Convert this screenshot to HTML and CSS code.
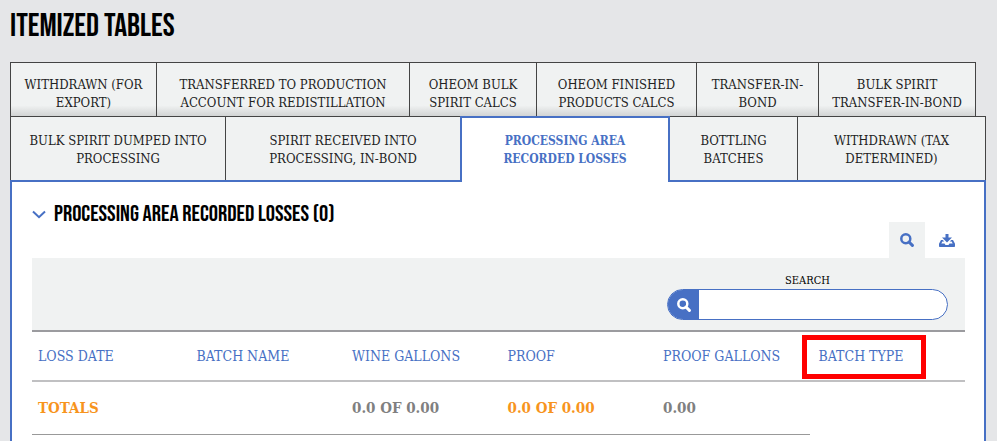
FILE: index.html
```html
<!DOCTYPE html>
<html lang="en">
<head>
	<meta charset="utf-8">
	<meta name="viewport" content="width=device-width, initial-scale=1.0">
	<title>Itemized Tables</title>
	<link rel="stylesheet" href="styles.css">
</head>
<body>
	<svg class="sprite" aria-hidden="true">
		<symbol id="icon-search" viewBox="0 0 14 14">
			<circle cx="5.8" cy="5.8" r="4.5" fill="none" stroke="currentColor" stroke-width="2.5"/>
			<path d="M9 9l3.400 3.400" stroke="currentColor" stroke-width="3" stroke-linecap="round"/>
		</symbol>
		<symbol id="icon-download" viewBox="0 0 16 13">
			<path fill="currentColor" d="M6.500 0h3v3.500H13l-5 5-5-5h3.500z"/>
			<path fill="currentColor" d="M2 6h1.800l1.500 1.500H3.400L2.300 9.500h3.200L6.500 11h3l1-1.500h3.200l-1.100-2h-1.900L12.200 6H14l2 3.700v2.500q0 .8-.8.8H.8Q0 13 0 12.200V9.700z"/>
		</symbol>
	</svg>

	<main class="page">
		<h1>Itemized Tables</h1>

		<div class="tabs tabs-back">
			<button type="button" class="tab">Withdrawn (for<br>export)</button>
			<button type="button" class="tab">Transferred to production<br>account for redistillation</button>
			<button type="button" class="tab">OHEOM bulk<br>spirit calcs</button>
			<button type="button" class="tab">OHEOM finished<br>products calcs</button>
			<button type="button" class="tab">Transfer-in-<br>bond</button>
			<button type="button" class="tab">Bulk spirit<br>transfer-in-bond</button>
		</div>
		<div class="tabs tabs-front">
			<button type="button" class="tab">Bulk spirit dumped into<br>processing</button>
			<button type="button" class="tab">Spirit received into<br>processing, in-bond</button>
			<button type="button" class="tab active">Processing area<br>recorded losses</button>
			<button type="button" class="tab">Bottling<br>batches</button>
			<button type="button" class="tab">Withdrawn (tax<br>determined)</button>
		</div>

		<section class="panel">
			<h2>
				<svg class="chevron" viewBox="0 0 14 9"><path d="M1 1.500l6 5.700 6-5.700" fill="none" stroke="currentColor" stroke-width="2"/></svg>
				Processing area recorded losses (0)
			</h2>

			<div class="tools">
				<button type="button" class="tool selected" aria-label="Show search"><svg width="14" height="14"><use href="#icon-search"/></svg></button>
				<button type="button" class="tool" aria-label="Download"><svg width="16" height="13"><use href="#icon-download"/></svg></button>
			</div>

			<div class="filter">
				<div class="search">
					<label for="search">Search</label>
					<div class="search-box">
						<button type="button" aria-label="Search"><svg width="14" height="14"><use href="#icon-search"/></svg></button>
						<input type="text" id="search">
					</div>
				</div>
			</div>

			<table>
				<thead>
					<tr>
						<th>Loss date</th>
						<th>Batch name</th>
						<th>Wine gallons</th>
						<th>Proof</th>
						<th>Proof gallons</th>
						<th class="marked">Batch type</th>
					</tr>
				</thead>
				<tbody>
					<tr>
						<td class="orange">Totals</td>
						<td></td>
						<td>0.0 of 0.00</td>
						<td class="orange">0.0 of 0.00</td>
						<td>0.00</td>
					</tr>
				</tbody>
			</table>
		</section>
	</main>
</body>
</html>
```
FILE: styles.css
```css
* {
	box-sizing: border-box;
}

body {
	margin: 0;
	background: #fff;
	color: #222;
	font-family: "Roboto Slab", "DejaVu Serif Condensed", "DejaVu Serif", serif;
	font-size: 13px;
	text-transform: uppercase;
}

button,
input {
	font: inherit;
	color: inherit;
	text-transform: inherit;
	cursor: pointer;
}

.sprite {
	display: none;
}

.page {
	padding: 8px 11px 0 10px;
	background: #e5e6e8;
}

h1,
h2 {
	margin: 0;
	color: #000;
	font-family: "Bebas Neue", Roboto, sans-serif;
	font-weight: normal;
}

h1 {
	margin-bottom: 16px;
	font-size: 32px;
	line-height: 38px;
}

/* tabs */
.tabs {
	display: grid;
}

.tabs-back {
	grid-template-columns: 147fr 253fr 127fr 160fr 122fr 157fr;
	margin-right: 10px;
}

.tabs-front {
	grid-template-columns: 216fr 235fr 209fr 128fr 188fr;
}

.tab {
	min-width: 0;
	padding: 15px 0 12px;
	border: 1px solid #444;
	border-left-width: 0;
	border-bottom: 0;
	background: #f0f2f2;
	line-height: 18px;
	white-space: nowrap;
}

.tab:first-child {
	border-left-width: 1px;
}

.tabs-back .tab {
	padding: 13px 0 4px;
	background: linear-gradient(#f0f2f2 80%, #d2d4d4);
}

.tab.active {
	position: relative;
	margin: 0 0 -2px -1px;
	padding: 14px 0;
	border: 2px solid #4770c4;
	border-bottom: 0;
	background: #fff;
	color: #4770c4;
	font-size: 12px;
	font-weight: bold;
}

/* panel */
.panel {
	padding: 20px 19px 6px 20px;
	border: 2px solid #4770c4;
	border-bottom: 0;
	background: #fff;
}

h2 {
	display: flex;
	align-items: center;
	gap: 8px;
	font-size: 23px;
	line-height: 24px;
}

.chevron {
	width: 14px;
	height: 9px;
	color: #4770c4;
}

.tools {
	display: flex;
	justify-content: flex-end;
	gap: 4px;
	margin-top: -4px;
}

.tool {
	display: flex;
	align-items: center;
	justify-content: center;
	width: 36px;
	height: 36px;
	padding: 0;
	border: 0;
	background: none;
	color: #4770c4;
}

.tool.selected {
	background: #f0f2f2;
}

.filter {
	display: flex;
	justify-content: flex-end;
	padding: 14px 17px 10px;
	border-bottom: 2px solid #9b9b9f;
	background: #f0f2f2;
}

.search {
	width: 281px;
	color: #000;
	font-size: 11px;
	line-height: 17px;
	text-align: center;
}

.search label {
	display: block;
}

.search-box {
	display: flex;
	height: 31px;
	border: 1px solid #4770c4;
	border-radius: 16px;
	background: #fff;
	overflow: hidden;
}

.search-box button {
	display: flex;
	align-items: center;
	justify-content: center;
	width: 31px;
	padding: 0;
	border: 0;
	background: #4770c4;
	color: #fff;
}

.search-box input {
	flex: 1;
	min-width: 0;
	border: 0;
	background: none;
}

table {
	width: 100%;
	border-collapse: separate;
	border-spacing: 0;
	table-layout: fixed;
}

th,
td {
	padding: 0 0 0 9px;
	font-size: 14px;
	text-align: left;
	white-space: nowrap;
}

th:first-child,
td:first-child {
	padding-left: 6px;
}

th {
	height: 50px;
	border-bottom: 2px solid #c0c0c2;
	color: #4770c4;
	font-weight: normal;
}

td {
	height: 53px;
	border-bottom: 1px solid #999;
	color: #808080;
	font-size: 15px;
	font-weight: bold;
}

td.orange {
	color: #f7941d;
}

/* red frame round the new column */
.marked {
	position: relative;
}

.marked::after {
	content: "";
	box-sizing: border-box;
	position: absolute;
	top: 3px;
	left: -8px;
	width: 124px;
	height: 44px;
	border: 5px solid #f00;
}
```
